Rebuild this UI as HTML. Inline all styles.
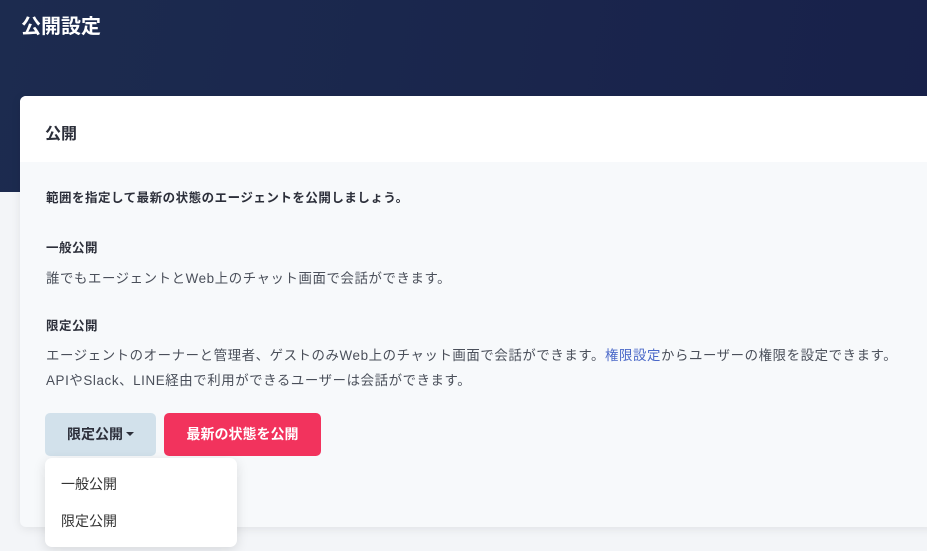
<!DOCTYPE html>
<html><head><meta charset="utf-8"><style>
*{margin:0;padding:0;box-sizing:border-box}
body{width:927px;height:551px;overflow:hidden;background:#f3f5f8;font-family:"Liberation Sans","Noto Sans CJK JP",sans-serif;color:#4a4f5a;position:relative}
.hero{position:absolute;left:0;top:0;width:927px;height:192px;background:linear-gradient(100deg,#1c2b4f,#18214a)}
h1{position:absolute;left:21px;top:10px;font-size:20px;color:#fff;font-weight:700}
.card{position:absolute;left:20px;top:96px;width:920px;height:431px;background:#f7f9fb;border-radius:6px;overflow:hidden;box-shadow:0 2px 10px rgba(0,0,0,.08)}
.ch{height:66px;background:#fff;padding:24px 25px;font-size:16px;font-weight:700;color:#2c2f3a}
.p{position:absolute;left:26px;font-size:13.4px;white-space:nowrap;letter-spacing:.6px}
.b{font-weight:700;color:#2c2f3a;font-size:12.5px;letter-spacing:.5px}
a{color:#4a68c8;text-decoration:none}
.btn1{position:absolute;left:45px;top:413px;width:111px;height:43px;background:#d2e1eb;border-radius:5px;font-size:14px;font-weight:700;color:#2c2f3a;line-height:43px;text-align:center}
.car{display:inline-block;width:0;height:0;border-left:4px solid transparent;border-right:4px solid transparent;border-top:4px solid #2c2f3a;vertical-align:3px;margin-left:3px}
.btn2{position:absolute;left:164px;top:413px;width:157px;height:43px;background:#f2335d;border-radius:5px;font-size:14px;font-weight:700;color:#fff;line-height:43px;text-align:center}
.dd{position:absolute;left:45px;top:458px;width:192px;height:89px;background:#fff;border-radius:7px;box-shadow:0 3px 12px rgba(0,0,0,.12);font-size:14px;color:#333}
.dd div{position:absolute;left:16px}
</style></head><body>
<div class="hero"></div>
<h1>公開設定</h1>
<div class="card">
<div class="ch">公開</div>
<div class="p b" style="top:91px">範囲を指定して最新の状態のエージェントを公開しましょう。</div>
<div class="p b" style="top:141px">一般公開</div>
<div class="p" style="top:171px">誰でもエージェントとWeb上のチャット画面で会話ができます。</div>
<div class="p b" style="top:219px">限定公開</div>
<div class="p" style="top:248px">エージェントのオーナーと管理者、ゲストのみWeb上のチャット画面で会話ができます。<a>権限設定</a>からユーザーの権限を設定できます。</div>
<div class="p" style="top:273px">APIやSlack、LINE経由で利用ができるユーザーは会話ができます。</div>
</div>
<div class="btn1">限定公開<span class="car"></span></div>
<div class="btn2">最新の状態を公開</div>
<div class="dd"><div style="top:16px">一般公開</div><div style="top:53px">限定公開</div></div>
</body></html>
